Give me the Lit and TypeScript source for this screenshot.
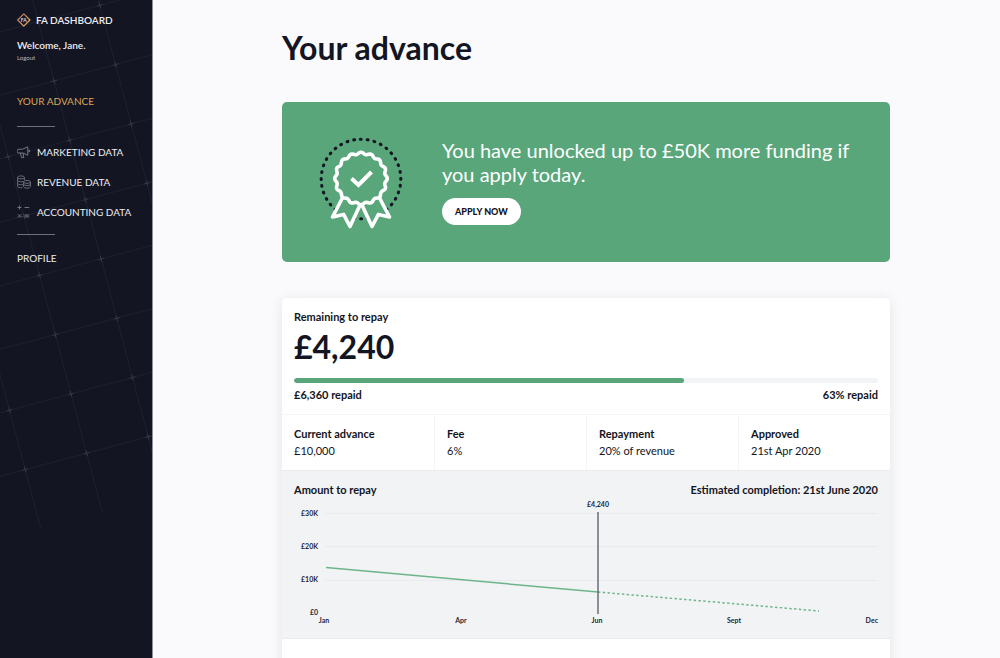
import { LitElement, html, svg, css } from "lit";
import { customElement } from "lit/decorators.js";

const GREEN = "#5aa67b";

/* Wavy outline of the rosette. */
const rosette = (cx: number, cy: number, r: number, amp: number, lobes: number) => {
  const pts: string[] = [];
  for (let i = 0; i < 240; i++) {
    const a = (i / 240) * Math.PI * 2;
    const rr = r + amp * Math.cos(lobes * (a + Math.PI / 2));
    pts.push(`${(cx + rr * Math.cos(a)).toFixed(2)} ${(cy + rr * Math.sin(a)).toFixed(2)}`);
  }
  return `M${pts.join("L")}Z`;
};

@customElement("side-grid")
class SideGrid extends LitElement {
  static styles = css`
    :host { position: absolute; inset: 0; overflow: hidden; pointer-events: none; }
    svg { display: block; }
  `;
  render() {
    const at = (i: number, j: number) => [54 + 15.7 * i - 61.5 * j, 81 + 59.3 * i + 16.4 * j];
    const lines = [];
    const marks = [];
    for (let i = -2; i <= 6; i++) {
      const [x1, y1] = at(i, -3);
      const [x2, y2] = at(i, 4);
      lines.push(svg`<line x1=${x1} y1=${y1} x2=${x2} y2=${y2}></line>`);
      for (let j = -3; j <= 3; j++) {
        const [x, y] = at(i, j);
        marks.push(svg`<path transform="translate(${x} ${y}) rotate(-15)" d="M-3 0H3M0-3V3"></path>`);
      }
    }
    for (let j = -3; j <= 3; j++) {
      const [x1, y1] = at(-3, j);
      const [x2, y2] = at(7, j);
      lines.push(svg`<line x1=${x1} y1=${y1} x2=${x2} y2=${y2}></line>`);
    }
    return html`<svg width="152" height="560" viewBox="0 0 152 560" aria-hidden="true">
      <g stroke="#1e2130" stroke-width="1" fill="none">${lines}</g>
      <g stroke="#353847" stroke-width="1" fill="none">${marks}</g>
    </svg>`;
  }
}

@customElement("side-nav")
class SideNav extends LitElement {
  static styles = css`
    :host {
      position: relative;
      display: flex;
      flex-direction: column;
      align-items: flex-start;
      box-sizing: border-box;
      padding: 12px 16px 12px 17px;
      background: #131523;
      border-right: 1px solid #8e8f98;
      color: #eeeef2;
      font-size: 10px;
      line-height: 16px;
    }
    a { color: inherit; text-decoration: none; }
    .brand { position: relative; display: flex; align-items: center; gap: 5px; font-weight: 600; }
    .brand svg, .item svg { flex: none; display: block; }
    .welcome { position: relative; margin: 9px 0 0; font-weight: 600; }
    .logout { position: relative; margin-top: 1px; font-size: 6px; line-height: 8px; color: #b4b5bd; }
    nav { position: relative; display: flex; flex-direction: column; align-items: flex-start; margin-top: 31px; }
    .active { color: #dba659; }
    .rule { width: 38px; height: 1px; margin: 0; border: 0; background: #6d6f7b; }
    .rule.first { margin-top: 17px; }
    .rule.last { margin-top: 14px; }
    .group { display: flex; flex-direction: column; gap: 14px; margin: 17px 0 0; padding: 0; list-style: none; }
    .item { display: flex; align-items: center; gap: 6px; }
    .profile { margin-top: 15px; }
  `;
  render() {
    return html`
      <side-grid></side-grid>
      <a class="brand" href="#">
        <svg width="14" height="16" viewBox="0 0 14 16" aria-hidden="true">
          <defs><linearGradient id="gold" x1="0" y1="0" x2="1" y2="1"><stop offset="0" stop-color="#b06a50"></stop><stop offset="1" stop-color="#e9b872"></stop></linearGradient></defs>
          <path d="M6.8 1.9L12.9 8 6.8 14.1 .7 8Z" fill="#131523" stroke="url(#gold)" stroke-width="1.3" stroke-linejoin="round"></path>
          <text x="6.8" y="9.8" fill="#dcdce2" font-size="5" font-weight="700" text-anchor="middle">FA</text>
        </svg>
        FA DASHBOARD
      </a>
      <p class="welcome">Welcome, Jane.</p>
      <a class="logout" href="#">Logout</a>
      <nav>
        <a class="active" href="#" aria-current="page">YOUR ADVANCE</a>
        <hr class="rule first" />
        <ul class="group">
          <li><a class="item" href="#">
            <svg width="14" height="14" viewBox="0 0 14 14" fill="none" stroke="#7d7f8b" stroke-width="0.9" stroke-linejoin="round" aria-hidden="true">
              <path d="M1.9 4.2H5.6L10.8 1.8V10.2L5.6 8H1.9A1.9 1.9 0 0 1 1.9 4.2ZM12 4.8A1.4 1.4 0 0 1 12 7.2ZM3.2 8L4.6 12.6H6.8L6 8.2"></path>
            </svg>MARKETING DATA</a></li>
          <li><a class="item" href="#">
            <svg width="14" height="14" viewBox="0 0 14 14" fill="none" stroke="#7d7f8b" stroke-width="0.8" aria-hidden="true">
              <ellipse cx="4" cy="2.4" rx="3.4" ry="1.5"></ellipse>
              <path d="M.6 2.4V11.4C.6 12.4 3 13 5.4 12.7M7.4 2.4V5M.6 5.4C1.2 7 5.4 7.2 6.4 6.2M.6 8.4C1.2 9.8 4.4 10 6 9.6"></path>
              <ellipse cx="10" cy="6.9" rx="3.4" ry="1.5"></ellipse>
              <path d="M6.6 6.9V11.8C7 13.7 13 13.7 13.4 11.8V6.9M6.6 9.3C7.2 11 12.8 11 13.4 9.3"></path>
            </svg>REVENUE DATA</a></li>
          <li><a class="item" href="#">
            <svg width="14" height="14" viewBox="0 0 14 14" fill="none" stroke="#7d7f8b" stroke-width="0.9" aria-hidden="true">
              <path d="M.4 2.5H4.4M2.4 .5V4.5M7.6 2.5H12.2M.8 9.2L4.2 12.6M4.2 9.2L.8 12.6M7.6 10H12.2M7.6 11.9H12.2"></path>
            </svg>ACCOUNTING DATA</a></li>
        </ul>
        <hr class="rule last" />
        <a class="profile" href="#">PROFILE</a>
      </nav>`;
  }
}

@customElement("funding-banner")
class FundingBanner extends LitElement {
  static styles = css`
    :host {
      display: flex;
      align-items: center;
      gap: 38px;
      box-sizing: border-box;
      min-height: 160px;
      padding: 30px 36px 32px;
      border-radius: 5px;
      background: #5aa67b;
      color: #fff;
    }
    svg { flex: none; display: block; }
    .copy { display: flex; flex-direction: column; align-items: flex-start; gap: 12px; }
    p { margin: 0; font-size: 20px; line-height: 24px; }
    button {
      height: 27px;
      padding: 0 13px;
      border: 0;
      border-radius: 14px;
      background: #fff;
      color: #131523;
      font: 900 9px/27px Lato, sans-serif;
    }
  `;
  render() {
    return html`
      <svg width="86" height="96" viewBox="0 0 86 96" fill="none" aria-hidden="true">
        <circle cx="43" cy="46" r="39.8" stroke="#131523" stroke-width="3.1" stroke-linecap="round" stroke-dasharray="0.8 6.146" transform="rotate(-91 43 46)"></circle>
        <path d="M26 62L14.5 84 25.6 81.4 32 93.5 43 70 54 93.5 60.4 81.4 71.5 84 60 62" fill=${GREEN} stroke="#fff" stroke-width="3.6" stroke-linejoin="round"></path>
        <path d=${rosette(43, 45.5, 25.3, 1, 16)} fill=${GREEN} stroke="#fff" stroke-width="3.6" stroke-linejoin="round"></path>
        <path d="M33.5 45.5L40.5 52 53.5 39" stroke="#fff" stroke-width="4"></path>
      </svg>
      <div class="copy">
        <p>You have unlocked up to £50K more funding if you apply today.</p>
        <button type="button">APPLY NOW</button>
      </div>`;
  }
}

@customElement("repay-chart")
class RepayChart extends LitElement {
  static styles = css`
    :host { display: block; }
    svg { display: block; width: 100%; height: auto; overflow: visible; }
    text { font-size: 7px; font-weight: 700; fill: #25273a; }
  `;
  render() {
    return html`<svg viewBox="0 0 584 129" role="img" aria-label="Amount to repay by month">
      <g stroke="#e9eaed" stroke-width="1">
        <path d="M31 15.5H584M31 48.5H584M31 82.5H584"></path>
      </g>
      <g text-anchor="end">
        <text x="24" y="18">£30K</text><text x="24" y="51">£20K</text>
        <text x="24" y="84">£10K</text><text x="24" y="117">£0</text>
      </g>
      <path d="M32 69.5L304 94" stroke="#6db48b" stroke-width="1.5" fill="none"></path>
      <path d="M304 94L525 113" stroke="#6db48b" stroke-width="1.5" stroke-dasharray="2.4 2.4" fill="none"></path>
      <path d="M304 14V116" stroke="#6b6d79" stroke-width="1.5"></path>
      <g text-anchor="middle">
        <text x="304" y="9">£4,240</text>
        <text x="30" y="125">Jan</text><text x="167" y="125">Apr</text>
        <text x="303" y="125">Jun</text><text x="440" y="125">Sept</text>
      </g>
      <text x="584" y="125" text-anchor="end">Dec</text>
    </svg>`;
  }
}

@customElement("advance-card")
class AdvanceCard extends LitElement {
  static styles = css`
    :host {
      display: block;
      border-radius: 5px;
      background: #fff;
      box-shadow: 0 2px 14px rgba(19, 21, 35, 0.09);
      overflow: hidden;
      font-size: 11px;
      line-height: 16px;
    }
    .summary { padding: 11px 12px; }
    h2 { margin: 0; font-size: 11px; line-height: 16px; font-weight: 700; }
    .amount { margin: 3px 0 0; font-size: 32px; line-height: 38px; font-weight: 700; }
    .track { height: 5px; margin-top: 12px; border-radius: 3px; background: #f2f3f5; overflow: hidden; }
    .fill { height: 100%; border-radius: 3px; background: #5aa67b; }
    .split { display: flex; justify-content: space-between; font-weight: 700; }
    .under { margin-top: 4px; }
    dl {
      display: grid;
      grid-template-columns: repeat(4, 1fr);
      margin: 0;
      border-top: 1px solid #f5f5f7;
      border-bottom: 1px solid #ebecf0;
    }
    dl div { padding: 11px 12px; }
    dl div + div { border-left: 1px solid #f5f5f7; }
    dt { font-weight: 700; }
    dd { margin: 1px 0 0; }
    .chart { padding: 11px 12px; background: #f2f3f5; border-bottom: 1px solid #ebecf0; }
    .rest { height: 80px; }
  `;
  render() {
    const facts = [
      ["Current advance", "£10,000"],
      ["Fee", "6%"],
      ["Repayment", "20% of revenue"],
      ["Approved", "21st Apr 2020"],
    ];
    const share = 66.8;
    return html`
      <section class="summary">
        <h2>Remaining to repay</h2>
        <p class="amount">£4,240</p>
        <div class="track"><div class="fill" style="width:${share}%"></div></div>
        <div class="split under"><span>£6,360 repaid</span><span>63% repaid</span></div>
      </section>
      <dl>${facts.map(([k, v]) => html`<div><dt>${k}</dt><dd>${v}</dd></div>`)}</dl>
      <section class="chart">
        <div class="split"><h2>Amount to repay</h2><span>Estimated completion: 21st June 2020</span></div>
        <repay-chart></repay-chart>
      </section>
      <div class="rest"></div>`;
  }
}

@customElement("app-root")
class AppRoot extends LitElement {
  static styles = css`
    :host {
      display: grid;
      grid-template-columns: 153px 1fr;
      height: 100vh;
      overflow: hidden;
      background: #fafafc;
      color: #131523;
      font-family: Lato, sans-serif;
    }
    main { display: flex; flex-direction: column; min-width: 0; padding: 28px 110px 0 129px; }
    h1 { margin: 0; font-size: 32px; line-height: 40px; font-weight: 700; }
    funding-banner { margin-top: 34px; flex: none; }
    advance-card { margin-top: 36px; flex: none; }
  `;
  render() {
    return html`
      <side-nav></side-nav>
      <main>
        <h1>Your advance</h1>
        <funding-banner></funding-banner>
        <advance-card></advance-card>
      </main>`;
  }
}
